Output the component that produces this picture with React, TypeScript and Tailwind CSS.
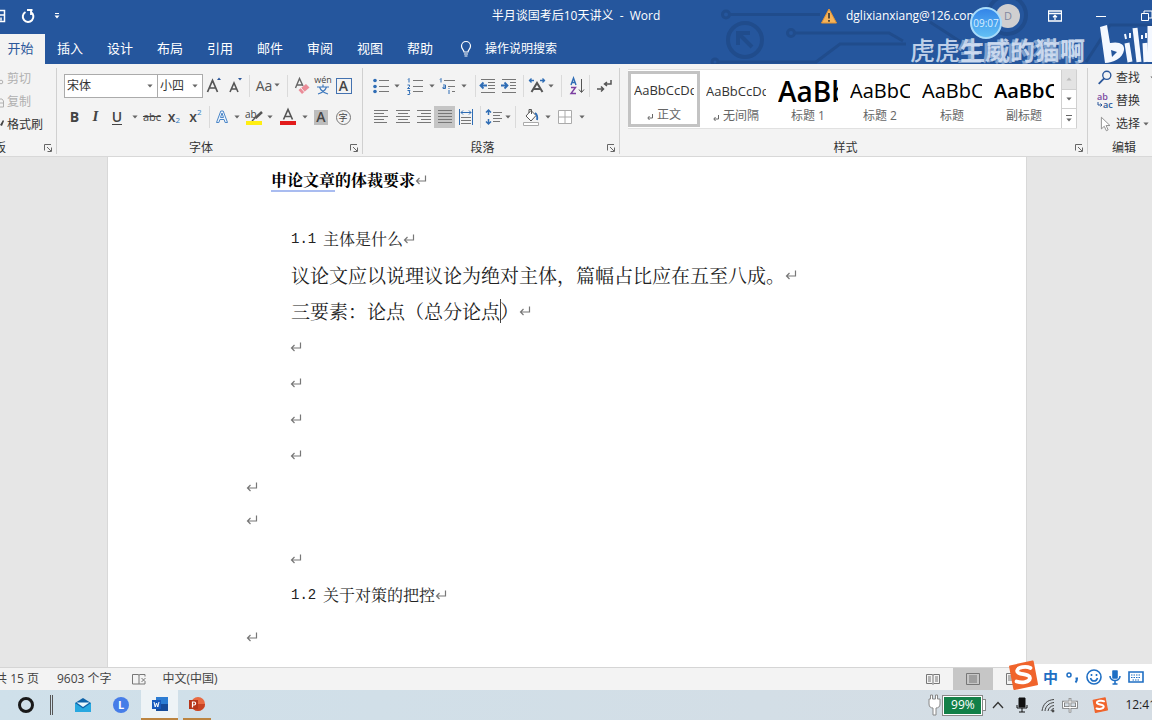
import React from "react";

type Kids = { children?: React.ReactNode };

function Caret({ className = "" }: { className?: string }) {
  return (
    <svg viewBox="0 0 6 4" className={"h-1 w-1.5 shrink-0 " + className} fill="#666" aria-hidden="true">
      <path d="M0.4 0.5h5.2L3 3.4z" />
    </svg>
  );
}

function CaretButton({ label, className = "w-2.5" }: { label: string; className?: string }) {
  return (
    <button aria-label={label} className={"flex h-[22px] shrink-0 items-center justify-center " + className}>
      <Caret />
    </button>
  );
}

function Tool({ label, className = "w-[22px]", children }: Kids & { label: string; className?: string }) {
  return (
    <button aria-label={label} className={"flex h-[22px] shrink-0 items-center justify-center " + className}>
      {children}
    </button>
  );
}

function Icon({ children, className = "h-5 w-5" }: Kids & { className?: string }) {
  return (
    <svg viewBox="0 0 20 20" className={"shrink-0 " + className} fill="none" stroke="#777" strokeWidth="1" aria-hidden="true">
      {children}
    </svg>
  );
}

function Sep({ className = "mx-0.5" }: { className?: string }) {
  return <span className={"h-[22px] w-px shrink-0 bg-[#dadada] " + className} />;
}

function Launcher() {
  return (
    <button aria-label="更多设置" className="absolute bottom-1 right-1 h-2 w-2">
      <svg viewBox="0 0 8 8" className="h-2 w-2" fill="none" stroke="#666" aria-hidden="true">
        <path d="M0.5 6.5V0.5H7M3 3l4 4M7.5 3.5v4h-4" />
      </svg>
    </button>
  );
}

function Group({ title, className, launcher = true, children }: Kids & { title: string; className: string; launcher?: boolean }) {
  return (
    <section aria-label={title} className={"relative flex flex-col " + className}>
      <div className="flex-1">{children}</div>
      <div
        className={
          "flex h-4 items-center justify-center whitespace-nowrap text-[12px] leading-4 text-[#333] " +
          (launcher ? "pr-6" : "")
        }
      >
        {title}
      </div>
      {launcher && <Launcher />}
    </section>
  );
}

function Divider() {
  return <div className="mb-0.5 mt-1 w-px shrink-0 bg-[#d0d0d0]" />;
}

function Lines({ rows }: { rows: [number, number][] }) {
  return (
    <Icon>
      {rows.map(([a, b], i) => (
        <path key={i} d={`M${a} ${3.5 + i * 3}H${b}`} />
      ))}
    </Icon>
  );
}

function Combo({ label, value, className }: { label: string; value: string; className: string }) {
  return (
    <div className={"relative flex h-6 items-center border border-[#ababab] bg-white " + className}>
      <select aria-label={label} className="h-full w-full appearance-none bg-transparent pl-0.5 text-[12px] text-[#333] outline-none">
        <option>{value}</option>
      </select>
      <Caret className="pointer-events-none absolute right-1" />
    </div>
  );
}

function FontGroup() {
  return (
    <Group title="字体" className="w-[305px] shrink-0 pl-[7px]">
      <div className="mt-[9px] flex h-[26px] items-center">
        <Combo label="字体名称" value="宋体" className="w-[94px]" />
        <Combo label="字号" value="小四" className="-ml-px w-[46px]" />
        <Tool label="增大字号">
          <Icon>
            <path d="M3.5 16L8.5 4.5 13.5 16M5.3 12h6.4" stroke="#555" strokeWidth="1.7" />
            <path d="M13 4l2-2.5L17 4z" fill="#2b579a" stroke="none" />
          </Icon>
        </Tool>
        <Tool label="减小字号">
          <Icon>
            <path d="M4 16l4-9 4 9M5.4 13h5.2" stroke="#555" strokeWidth="1.6" />
            <path d="M12 2l2 2.5L16 2z" fill="#2b579a" stroke="none" />
          </Icon>
        </Tool>
        <Sep />
        <Tool label="更改大小写" className="w-8 gap-0.5 pb-0.5 text-[14px] text-[#555]">
          Aa
          <Caret />
        </Tool>
        <Sep className="mx-[3px]" />
        <Tool label="清除所有格式" className="w-[21px]">
          <Icon>
            <path d="M3.5 12L7.5 2.5 11 10M5 9h5" stroke="#666" strokeWidth="1.4" />
            <path d="M6.500 14l7.500-6 3.500 3.500L10 18z" fill="#ea8c98" stroke="none" />
            <path d="M9 12l3.500 4" stroke="#f3f3f3" />
          </Icon>
        </Tool>
        <Tool label="拼音指南" className="w-[21px]">
          <Icon>
            <text x="10" y="7" textAnchor="middle" fontSize="9" fill="#444" stroke="none">wén</text>
            <path d="M10 8.500V11M4 11h12M6.500 11c1 3 4 5.500 8.500 7M13.500 11c-1 3-4 5.500-8.500 7" stroke="#3d78bd" strokeWidth="1.200" />
          </Icon>
        </Tool>
        <Tool label="字符边框" className="w-[21px]">
          <span className="flex h-4 w-4 items-center justify-center border border-[#4472b0] text-[14px] font-semibold leading-none text-[#444]">A</span>
        </Tool>
      </div>
      <div className="mt-[5px] flex h-[26px] items-center text-[14px] text-[#444]">
        <Tool label="加粗" className="w-[21px] pb-0.5 font-bold">B</Tool>
        <Tool label="倾斜" className="w-[21px] pb-0.5 font-[Liberation_Serif,serif] text-[15px] font-bold italic">I</Tool>
        <Tool label="下划线"><span className="border-b border-[#444] font-semibold leading-[14px]">U</span></Tool>
        <CaretButton label="下划线样式" className="w-[13px]" />
        <Tool label="删除线"><span className="text-[11px] line-through">abc</span></Tool>
        <Tool label="下标" className="w-[22px] pb-0.5"><span className="font-semibold">x</span><span className="mt-2 text-[8px] text-[#2b79c0]">2</span></Tool>
        <Tool label="上标" className="w-[21px] pb-0.5"><span className="font-semibold">x</span><span className="mb-2 text-[8px] text-[#2b79c0]">2</span></Tool>
        <Sep className="ml-[3px] mr-0.5" />
        <Tool label="文本效果" className="w-5">
          <Icon>
            <path d="M4.5 15.5L8.8 4h2.4l4.3 11.5h-2.4l-1-3H7.9l-1 3zM8.5 10.500h3L10 6z" stroke="#4a86c8" fill="#eef5fd" />
          </Icon>
        </Tool>
        <CaretButton label="文本效果选项" />
        <Tool label="突出显示" className="w-[23px]">
          <Icon>
            <text x="1" y="11" fontSize="10" fill="#444" stroke="none">ab</text>
            <path d="M18 5L11.500 11" stroke="#555" strokeWidth="2.500" />
            <path d="M11.500 10.500L8 14" stroke="#555" strokeWidth="1.500" />
            <path d="M2 14h16v4H2z" fill="#ffee12" stroke="none" />
          </Icon>
        </Tool>
        <CaretButton label="突出显示颜色" />
        <Tool label="字体颜色" className="w-[25px]">
          <Icon>
            <path d="M5.500 12.500L10 2.500l4.500 10M7 9.500h6" stroke="#555" strokeWidth="1.6" />
            <path d="M2 14h16v4H2z" fill="#e21b1b" stroke="none" />
          </Icon>
        </Tool>
        <CaretButton label="字体颜色选项" />
        <Tool label="字符底纹"><span className="flex h-[15px] w-[14px] items-center justify-center bg-[#bdbdbd] font-semibold leading-none">A</span></Tool>
        <Tool label="带圈字符"><span className="flex h-[15px] w-[15px] items-center justify-center rounded-full border border-[#777] text-[9px] leading-none">字</span></Tool>
      </div>
    </Group>
  );
}

function ParagraphGroup() {
  return (
    <Group title="段落" className="w-[256px] shrink-0 pl-[7px]">
      <div className="mt-[9px] flex h-[26px] items-center">
        <Tool label="项目符号">
          <Icon>
            <path d="M8 4.5h10M8 10.5h10M8 15.5h10" />
            <g fill="#2f6db5" stroke="none"><circle cx="4" cy="4.5" r="1.8" /><circle cx="4" cy="10.5" r="1.8" /><circle cx="4" cy="15.5" r="1.8" /></g>
          </Icon>
        </Tool>
        <CaretButton label="项目符号库" />
        <Tool label="编号" className="w-[25px]">
          <Icon>
            <path d="M8 4.5h10M8 10.5h10M8 15.5h10" />
            <path d="M3 3.500l1-1v4M2.500 9h2v1.500l-2 2h2.500M2.500 14.500H5l-1 1.500 1 1-.5 1.500h-2" stroke="#2f6db5" />
          </Icon>
        </Tool>
        <CaretButton label="编号库" />
        <Tool label="多级列表">
          <Icon>
            <path d="M6 4.5h11M10 10.5h7M14 15.5h3" />
            <path d="M2 3.500l1-1v4M5 9h2.500v3.500H5V11h2.500M11 14v4M11 12v1" stroke="#2f6db5" />
          </Icon>
        </Tool>
        <CaretButton label="多级列表库" />
        <Sep className="ml-1.5 mr-0.5" />
        <Tool label="减少缩进量" className="w-5">
          <Icon>
            <path d="M3 3.5h14M10 6.5h7M10 9.5h7M10 12.5h7M3 16.5h14" />
            <path d="M9 9.5H3M5.500 6.500l-3 3 3 3" stroke="#2f6db5" strokeWidth="1.8" />
          </Icon>
        </Tool>
        <Tool label="增加缩进量">
          <Icon>
            <path d="M3 3.5h14M11 6.5h6M11 9.5h6M11 12.5h6M3 16.5h14" />
            <path d="M2 9.5h6M5.500 6.500l3 3-3 3" stroke="#2f6db5" strokeWidth="1.8" />
          </Icon>
        </Tool>
        <Sep className="mx-[3px]" />
        <Tool label="中文版式" className="w-5">
          <Icon>
            <path d="M4.5 16L10 7l5.5 9M6.500 13h7" stroke="#555" strokeWidth="2" />
            <path d="M7 4.5H2M4.500 2.500l-2 2 2 2M13 4.5h5M15.500 2.500l2 2-2 2" stroke="#2f6db5" strokeWidth="1.300" />
          </Icon>
        </Tool>
        <CaretButton label="中文版式选项" className="w-2" />
        <Sep className="mx-1.5" />
        <Tool label="排序" className="w-[18px]">
          <Icon>
            <path d="M4 9l2.500-7L9 9M5 6.500h3" stroke="#2f6db5" strokeWidth="1.400" />
            <path d="M4 11.500h4.500l-4.500 6h5" stroke="#7b3fa0" strokeWidth="1.400" />
            <path d="M14.5 3v13M12 13.500l2.500 3 2.500-3" stroke="#555" />
          </Icon>
        </Tool>
        <Sep className="mx-[3px]" />
        <Tool label="显示编辑标记">
          <Icon>
            <path d="M17 4v4h-6M13 6l-2.500 2L13 10M3 13h6M7 10.500L9.500 13 7 15.500" stroke="#555" strokeWidth="1.5" />
          </Icon>
        </Tool>
      </div>
      <div className="mt-[5px] flex h-[26px] items-center">
        <Tool label="左对齐"><Lines rows={[[3, 17], [3, 13], [3, 17], [3, 13], [3, 16]]} /></Tool>
        <Tool label="居中" className="w-[21px]"><Lines rows={[[3, 17], [5, 15], [3, 17], [5, 15], [3, 17]]} /></Tool>
        <Tool label="右对齐" className="w-[21px]"><Lines rows={[[3, 17], [7, 17], [3, 17], [7, 17], [3, 17]]} /></Tool>
        <Tool label="两端对齐" className="w-[21px] bg-[#c5c5c5]"><Lines rows={[[3, 17], [3, 17], [3, 17], [3, 17], [3, 17]]} /></Tool>
        <Tool label="分散对齐" className="w-[21px]">
          <Icon>
            <path d="M3.5 2v16M16.5 2v16M5 5.5h10M7 3.500l-2 2 2 2M13 3.500l2 2-2 2" stroke="#2f6db5" />
            <path d="M5 10.5h10M5 13.5h10M5 16.5h10" />
          </Icon>
        </Tool>
        <Sep className="ml-1 mr-0.5" />
        <Tool label="行距">
          <Icon>
            <path d="M4.5 3v5M4.5 12v5M2 5.500L4.5 3 7 5.500M2 14.500L4.5 17 7 14.500" stroke="#2f6db5" strokeWidth="1.5" />
            <path d="M9 5.5h9M9 8.5h7M9 11.5h9M9 14.5h7" />
          </Icon>
        </Tool>
        <CaretButton label="行距选项" className="w-1.5" />
        <Sep className="mx-1" />
        <Tool label="底纹">
          <Icon>
            <path d="M5 9l5-5.500 5 5-5 5.500zM8 6V2.500h2.500V7" stroke="#555" fill="#fff" />
            <path d="M14 6q3 2 2 7" stroke="#2f6db5" strokeWidth="1.8" />
            <path d="M2.5 15.5h15v3h-15z" fill="#fff" stroke="#aaa" />
          </Icon>
        </Tool>
        <CaretButton label="底纹颜色" className="w-3" />
        <Tool label="边框">
          <Icon><path d="M3.5 3.5h13v13h-13zM10 3.500v13M3.5 10h13" stroke="#aaa" fill="#fff" /></Icon>
        </Tool>
        <CaretButton label="边框选项" className="w-3" />
      </div>
    </Group>
  );
}

const styles = [
  { name: "正文", mark: true, sample: "AaBbCcDd", look: "text-[13px] text-[#333]" },
  { name: "无间隔", mark: true, sample: "AaBbCcDd", look: "text-[13px] text-[#333]" },
  { name: "标题 1", mark: false, sample: "AaBb", look: "text-[28px] font-semibold text-black" },
  { name: "标题 2", mark: false, sample: "AaBbC", look: "text-[20px] text-black" },
  { name: "标题", mark: false, sample: "AaBbC", look: "text-[20px] text-black" },
  { name: "副标题", mark: false, sample: "AaBbC", look: "text-[20px] font-semibold text-black" },
];

function StylesGroup() {
  return (
    <Group title="样式" className="min-w-0 flex-1 pl-2">
      <div className="mt-[5px] flex h-[60px] w-fit border-y border-[#e1e1e1] bg-white">
        {styles.map((s, i) => (
          <button
            key={s.name}
            className={
              "my-px flex w-[72px] flex-col overflow-hidden " +
              (i === 0 ? "border-[3px] border-[#c3c3c3] px-[3px]" : "px-1.5 pt-[3px]")
            }
          >
            <span className={"flex h-[33px] w-full items-center overflow-hidden whitespace-nowrap leading-8 " + s.look}>{s.sample}</span>
            <span className="flex h-[18px] w-full items-center justify-center gap-1 whitespace-nowrap text-[12px] leading-4 text-[#666]">
              {s.mark && (
                <svg viewBox="0 0 6 6" className="mt-1 h-1.5 w-1.5" fill="none" stroke="#666" aria-hidden="true">
                  <path d="M5.500 0v4H1M2.500 2L0.800 4l1.700 2" />
                </svg>
              )}
              {s.name}
            </span>
          </button>
        ))}
        <div className="ml-px flex w-4 flex-col border-x border-[#d0d0d0]">
          <button aria-label="上一行" className="flex flex-1 items-center justify-center bg-[#e3e3e3]"><Caret className="rotate-180 opacity-30" /></button>
          <button aria-label="下一行" className="flex flex-1 items-center justify-center border-y border-[#d0d0d0]"><Caret /></button>
          <button aria-label="其他样式" className="flex flex-1 flex-col items-center justify-center gap-0.5"><span className="h-px w-1.5 bg-[#666]" /><Caret /></button>
        </div>
      </div>
    </Group>
  );
}

function EditGroup() {
  return (
    <Group title="编辑" launcher={false} className="w-16 shrink-0 pl-2">
      <div className="mt-0.5 flex flex-col text-[12px] text-[#333]">
        <button className="flex h-[23px] items-center gap-0.5 whitespace-nowrap">
          <Icon className="h-[18px] w-[18px]"><circle cx="12" cy="7" r="4.5" stroke="#2b579a" strokeWidth="1.5" /><path d="M9 10.500l-6 6" stroke="#2b579a" strokeWidth="2" /></Icon>
          查找<Caret className="ml-2" />
        </button>
        <button className="flex h-[23px] items-center gap-0.5 whitespace-nowrap">
          <svg viewBox="0 0 18 18" className="h-[18px] w-[18px]" fontSize="9" fontWeight="600" aria-hidden="true">
            <text x="1" y="8" fill="#7a4aa0">ab</text>
            <text x="7" y="16" fill="#2b579a">ac</text>
            <path d="M2 10v3h4M4.5 11.500L6 13l-1.500 1.500" fill="none" stroke="#2b579a" />
          </svg>
          替换
        </button>
        <button className="flex h-[23px] items-center gap-0.5 whitespace-nowrap">
          <Icon className="h-[18px] w-[18px]"><path d="M6 2.500v13l3.200-3 2.300 5 2-1-2.300-4.800h4.300z" fill="#fff" stroke="#888" /></Icon>
          选择<Caret className="ml-px" />
        </button>
      </div>
    </Group>
  );
}

function ClipboardGroup() {
  return (
    <section aria-label="剪贴板" className="relative flex w-14 shrink-0 flex-col overflow-hidden text-[12px]">
      <div className="flex flex-1 flex-col pt-[3px]">
        <button className="flex h-[23px] items-center gap-[3px] whitespace-nowrap text-[#b0b0b0]">
          <svg viewBox="0 0 4 12" className="h-3 w-1" aria-hidden="true"><circle cx="1" cy="9" r="1.8" fill="none" stroke="#b0b0b0" /></svg>
          剪切
        </button>
        <button className="flex h-[23px] items-center gap-[3px] whitespace-nowrap text-[#b0b0b0]">
          <svg viewBox="0 0 4 12" className="h-3 w-1" aria-hidden="true"><path d="M0 3h2l1.500 2v6H0M0 7h3" fill="none" stroke="#b0b0b0" /></svg>
          复制
        </button>
        <button className="flex h-[23px] items-center gap-[3px] whitespace-nowrap text-[#333]">
          <svg viewBox="0 0 4 12" className="h-3 w-1" aria-hidden="true"><path d="M0 6l3-5 1 1-2 5z" fill="#444" /></svg>
          格式刷
        </button>
      </div>
      <div className="flex h-4 w-1.5 items-center justify-end whitespace-nowrap leading-4 text-[#333]">剪贴板</div>
      <Launcher />
    </section>
  );
}

const tabs = ["插入", "设计", "布局", "引用", "邮件", "审阅", "视图", "帮助"];

function Header() {
  return (
    <header className="relative shrink-0 overflow-hidden bg-[#25569d] text-white">
      <svg viewBox="0 0 452 64" className="absolute right-0 top-0 h-16 w-[452px]" fill="none" stroke="#204c8c" strokeWidth="3" aria-hidden="true">
        <circle cx="26" cy="14.5" r="3.5" /><path d="M30 14.500h90" />
        <circle cx="45" cy="40" r="17" strokeWidth="4" /><path d="M52 47L39 34M38 45V33h12" strokeWidth="4" />
        <circle cx="91" cy="33" r="3.5" /><path d="M95 33h94l14 8M116 62l24-18h66" />
        <circle cx="15" cy="62" r="3" /><path d="M19 62h98M230 22l34 22M386 62l24-37h42" />
        <circle cx="307" cy="15" r="19" strokeWidth="4" />
      </svg>
      <div className="relative flex h-[34px] items-center pb-0.5 text-[12px]">
        <div className="flex min-w-0 flex-1 items-center">
          <button aria-label="保存" className="h-4 w-1.5">
            <svg viewBox="0 0 6 14" className="h-3.5 w-1.5" fill="none" stroke="#fff" strokeWidth="1.5" aria-hidden="true"><path d="M0 1.500h4.500v11H0M0 6h4M1 8.500v3" /></svg>
          </button>
          <button aria-label="重复" className="ml-3.5">
            <svg viewBox="0 0 16 16" className="h-4 w-4" fill="none" stroke="#fff" strokeWidth="2" aria-hidden="true"><path d="M5.500 4A5.300 5.300 0 1 0 11 4.200" /><path d="M7 2h5.500M11 2v5" strokeWidth="1.800" /></svg>
          </button>
          <button aria-label="自定义快速访问工具栏" className="ml-[18px]">
            <svg viewBox="0 0 6 6" className="h-1.5 w-1.5" fill="#fff" aria-hidden="true"><path d="M1 0h4v1H1zM0.500 2.500h5L3 5.500z" /></svg>
          </button>
        </div>
        <h1 className="shrink-0 whitespace-pre">半月谈国考后10天讲义  -  Word</h1>
        <div className="flex min-w-0 flex-1 items-center justify-end">
          <svg viewBox="0 0 16 16" className="h-4 w-4 shrink-0" aria-hidden="true"><path d="M8 1l7.500 14H.5z" fill="#f6b45a" stroke="#e59433" /><path d="M8 5v5.500M8 12v1.800" stroke="#333" strokeWidth="1.6" /></svg>
          <span className="ml-[9px] mr-[23px] w-[127px] overflow-hidden whitespace-nowrap">dglixianxiang@126.com</span>
          <span className="flex h-6 w-6 shrink-0 items-center justify-center rounded-full bg-[#d0cfd0] text-[11px] text-[#8088a0]">D</span>
          <button aria-label="功能区显示选项" className="ml-7">
            <svg viewBox="0 0 14 12" className="h-3 w-3.5" fill="none" stroke="#fff" strokeWidth="1.300" aria-hidden="true"><path d="M.5 1h13v10H.5zM.5 3.500h13M7 10V5.500M5 7.300l2-2 2 2" /></svg>
          </button>
          <button aria-label="最小化" className="ml-[34px] flex h-4 w-2.5 items-center"><span className="h-px w-2.5 bg-white" /></button>
          <button aria-label="还原" className="ml-[35px]">
            <svg viewBox="0 0 11 12" className="h-3 w-[11px]" fill="none" stroke="#fff" aria-hidden="true"><path d="M.5 3.500h7v7h-7zM3 3.500V1h8v7H7.500" /></svg>
          </button>
        </div>
      </div>
      <nav className="relative flex h-[30px] text-[13px]">
        <button className="flex w-[45px] items-center justify-center bg-[#f3f3f3] pr-1 text-[#2b579a]">开始</button>
        {tabs.map((t) => (
          <button key={t} className="w-[50px]">{t}</button>
        ))}
        <button className="ml-3.5 flex items-center gap-3 whitespace-nowrap text-[12px]">
          <svg viewBox="0 0 14 18" className="h-[18px] w-3.5" fill="none" stroke="#fff" strokeWidth="1.2" aria-hidden="true"><path d="M5 12c0-2-2.500-3-2.500-6a4.500 4.500 0 0 1 9 0c0 3-2.500 4-2.500 6zM5 14h4M5.500 16h3" /></svg>
          操作说明搜索
        </button>
      </nav>
      <div className="absolute right-[150px] top-[7px] flex h-8 w-8 items-center justify-center rounded-full border-2 border-[#a9dcfa] bg-linear-to-b from-[#3485e8] to-[#63c0f4] text-[10px] text-[#d9f0ff]">09:07</div>
      <div className="absolute right-[67px] top-[35px] whitespace-nowrap text-[25px] font-medium leading-[30px] text-[#dbe6f6]/85">
        虎虎<span className="font-bold [text-shadow:-3px_1px_0_rgba(220,232,250,0.5)]">生威的猫啊</span>
      </div>
      <svg viewBox="0 0 52 42" className="absolute right-0 top-[23px] h-[42px] w-[52px]" fill="none" stroke="#f4f8ff" aria-label="bilibili" role="img">
        <path d="M0 4l7-2 3 18c9-2 15 1 14 7-1 8-11 13-19 13z" fill="#f4f8ff" stroke="none" />
        <path d="M11 27l6 2-5 5z" fill="#25569d" stroke="none" />
        <path d="M27 20l3 19M45 20l1 19" strokeWidth="5" />
        <path d="M35 5l4 34" strokeWidth="5" />
        <path d="M50 3v36" strokeWidth="5" />
        <path d="M25 11l1 5M30 10v5M42 12v4M46 10v5" strokeWidth="2" />
      </svg>
    </header>
  );
}

function Mark() {
  return (
    <svg viewBox="0 0 12 10" className="h-2.5 w-3 shrink-0" fill="none" stroke="#777" strokeWidth="1.200" aria-hidden="true">
      <path d="M10.500 0.500V6H1.500M4.500 3L1.500 6l3 3" />
    </svg>
  );
}

function Line({ className, children }: Kids & { className: string }) {
  return (
    <p className={"flex items-center whitespace-nowrap " + className}>
      {children}
      <Mark />
    </p>
  );
}

function Document() {
  return (
    <main className="flex min-h-0 flex-1 overflow-hidden bg-[#e6e6e6] pl-[107px] pr-[125px]">
      <article className="min-w-0 flex-1 border-x border-[#d8d8d8] bg-white pl-[138px] font-['Noto_Serif_CJK_SC','Noto_Sans_CJK_SC',serif] font-normal text-[#222]">
        <Line className="h-[46px] pl-[25px] text-[16px] font-bold text-black">
          <span className="underline decoration-[#a9bcf0] decoration-2 underline-offset-4">申论文章</span>的体裁要求
        </Line>
        <Line className="mt-[18px] h-9 pl-[45px] text-[16px]">
          <span className="w-8 font-['Liberation_Mono',monospace] text-[14px]">1.1</span>主体是什么
        </Line>
        <Line className="h-9 pl-[45px] text-[19px]">议论文应以说理议论为绝对主体，篇幅占比应在五至八成。</Line>
        <Line className="h-9 pl-[45px] text-[19px]">
          三要素：论点（总分论点<span className="-mr-px h-6 w-px bg-[#444]" />）
        </Line>
        <Line className="h-9 pl-11" />
        <Line className="h-9 pl-11" />
        <Line className="h-9 pl-11" />
        <Line className="h-9 pl-11" />
        <Line className="h-7" />
        <Line className="h-[38px]" />
        <Line className="h-10 pl-11" />
        <Line className="h-8 pl-[45px] text-[16px]">
          <span className="w-8 font-['Liberation_Mono',monospace] text-[14px]">1.2</span>关于对策的把控
        </Line>
        <Line className="h-[52px]" />
      </article>
    </main>
  );
}

function Sogou({ className }: { className: string }) {
  return (
    <svg viewBox="0 0 28 28" className={className} aria-hidden="true">
      <path d="M2 6L23 1.500l4 21L6 27z" fill="#f0642c" stroke="#f0642c" strokeWidth="2" strokeLinejoin="round" />
      <path d="M21 7.500c-4-2-12-1-12.500 2.500-.5 4 12.500 2.500 12 7-.5 4-8 4.500-12.500 3" fill="none" stroke="#fff" strokeWidth="3.5" strokeLinecap="round" />
    </svg>
  );
}

function StatusBar() {
  return (
    <div className="relative flex h-[23px] shrink-0 items-center border-t border-[#d5d5d5] bg-[#f3f3f3] text-[12px] text-[#444]">
      <span className="flex w-[39px] justify-end whitespace-nowrap">第 3 页，共 15 页</span>
      <span className="ml-[18px] whitespace-nowrap">9603 个字</span>
      <button aria-label="校对" className="ml-5">
        <svg viewBox="0 0 15 12" className="h-3 w-[15px]" fill="none" stroke="#777" aria-hidden="true"><path d="M7 2v9H.5V1.500H6zM7 2l1-.5h5v2M7 11h6V9M9.500 5l4 4M13.500 5l-4 4" /></svg>
      </button>
      <span className="ml-4 whitespace-nowrap">中文(中国)</span>
      <div className="ml-auto mr-[119px] flex h-full">
        <button aria-label="阅读视图" className="flex w-10 items-center justify-center">
          <svg viewBox="0 0 14 12" className="h-3 w-3.5" fill="none" stroke="#777" aria-hidden="true"><path d="M.5 1.500H6l1 .5 1-.5h5.500v9H8l-1 1-1-1H.5zM7 2v9M2 4h3M2 6h3M2 8h3M9 4h3M9 6h3M9 8h3" /></svg>
        </button>
        <button aria-label="页面视图" className="flex w-10 items-center justify-center bg-[#c6c6c6]">
          <svg viewBox="0 0 14 12" className="h-3 w-3.5" fill="none" stroke="#777" aria-hidden="true"><path d="M.5.5h13v11H.5zM3 3h8M3 5h8M3 7h8M3 9h8" /></svg>
        </button>
        <button aria-label="Web 版式视图" className="flex w-10 items-center justify-center">
          <svg viewBox="0 0 14 12" className="h-3 w-3.5" fill="none" stroke="#777" aria-hidden="true"><path d="M.5.5h13v11H.5zM2 3h8M2 5h8M2 7h8" /></svg>
        </button>
      </div>
      <div className="absolute -top-1 bottom-0 right-0 flex w-[136px] items-center gap-[7px] bg-white pl-[27px] text-[#1f6fc4]">
        <Sogou className="absolute -left-2 -top-1 h-[30px] w-[30px]" />
        <span className="text-[15px] font-bold leading-none">中</span>
        <svg viewBox="0 0 14 16" className="h-4 w-3.5 shrink-0" fill="none" stroke="#1f6fc4" strokeWidth="1.5" aria-hidden="true"><circle cx="4" cy="6" r="2" /><path d="M10.500 9.500h1.500c0 2-.5 3-1.500 4" strokeWidth="2" /></svg>
        <svg viewBox="0 0 16 16" className="h-4 w-4 shrink-0" fill="none" stroke="#1f6fc4" strokeWidth="1.6" aria-hidden="true"><circle cx="8" cy="8" r="7" /><path d="M4.500 9c1 4 6 4 7 0M5.500 5v2M10.500 5v2" /></svg>
        <svg viewBox="0 0 12 16" className="h-4 w-3 shrink-0" fill="none" stroke="#1f6fc4" strokeWidth="1.6" aria-hidden="true"><path d="M4 2h4v7H4z" fill="#1f6fc4" strokeLinejoin="round" /><path d="M1 7c0 6 10 6 10 0M6 11.500V15M3.500 15h5" /></svg>
        <svg viewBox="0 0 16 12" className="h-3 w-4 shrink-0" fill="none" stroke="#1f6fc4" strokeWidth="1.6" aria-hidden="true"><path d="M1 1h14v10H1z" /><path d="M3 4h10M3 6.500h10M4.500 9h7" strokeWidth="1.2" strokeDasharray="1.500 1" /></svg>
      </div>
    </div>
  );
}

function Taskbar() {
  return (
    <footer className="flex h-[30px] shrink-0 items-center bg-linear-to-r from-[#cfe0ea] to-[#d5dde4] text-[12px] text-[#222]">
      <button aria-label="Cortana" className="ml-[18px] h-4 w-4 rounded-full border-[3px] border-[#1a1a1a]" />
      <span className="ml-4 h-5 w-[3px] border-x border-[#555]" />
      <button aria-label="邮件" className="ml-[22px]">
        <svg viewBox="0 0 16 16" className="h-4 w-4" aria-hidden="true"><path d="M0 6l8-5 8 5v9H0z" fill="#0f63a8" /><path d="M1.500 5.500h13L8 10z" fill="#e8f6fd" /><path d="M0 6l8 5.500L16 6v9H0z" fill="#28a8e0" /></svg>
      </button>
      <button aria-label="联想" className="ml-[22px] flex h-4 w-4 items-center justify-center rounded-full bg-[#467de8] text-[11px] font-bold text-white">L</button>
      <button aria-label="Word" className="ml-3 flex h-full w-[37px] items-center justify-center border-b-2 border-[#bc8440] bg-[#eef3f6]">
        <svg viewBox="0 0 16 16" className="h-4 w-4" aria-hidden="true"><path d="M4 1h12v14H4z" fill="#2b7cd3" /><path d="M4 8h12v7H4z" fill="#164b9a" /><path d="M0 4h9v9H0z" fill="#185abd" /><path d="M2 6l1.200 5 1.300-4 1.300 4L7 6" fill="none" stroke="#fff" /></svg>
      </button>
      <button aria-label="PowerPoint" className="ml-[5px] flex h-full w-7 items-center justify-center border-b-2 border-[#bc8440]">
        <svg viewBox="0 0 16 16" className="h-4 w-4" aria-hidden="true"><circle cx="9" cy="8" r="7" fill="#e86a42" /><path d="M9 8h7a7 7 0 0 1-14 0z" fill="#c84323" /><path d="M0 4h9v9H0z" fill="#b7361a" /><path d="M3.500 11.500V6h1.600c2 0 2 3 0 3H3.500" fill="none" stroke="#fff" strokeWidth="1.2" /></svg>
      </button>
      <div className="-mr-1 ml-auto flex items-center">
        <svg viewBox="0 0 14 22" className="h-[22px] w-3.5" fill="#fff" stroke="#888" aria-hidden="true"><path d="M3.500 5V1h2v4h3V1h2v4h2.500v5c0 3-2 4-4 4v7h-3v-7c-2 0-4-1-4-4V5z" /></svg>
        <span className="ml-0.5 flex h-[19px] w-[39px] items-center justify-center border border-white bg-[#128048] text-[12px] text-white outline outline-[#888]">99%</span>
        <span className="h-3 w-1 border border-[#888] bg-white" />
        <svg viewBox="0 0 12 8" className="ml-1.5 h-2 w-3" fill="none" stroke="#333" strokeWidth="1.3" aria-hidden="true"><path d="M1 7l5-5.500L11 7" /></svg>
        <svg viewBox="0 0 12 16" className="ml-3 h-4 w-3" aria-hidden="true"><path d="M3 1h6v9H3z" fill="#111" stroke="#111" strokeLinejoin="round" /><path d="M1 8v3h10V8M6 11v4M3 15h6" fill="none" stroke="#111" /></svg>
        <svg viewBox="0 0 16 16" className="ml-3 h-4 w-4" fill="none" stroke="#444" aria-hidden="true"><path d="M2 14C3 7 7 3 14 2.500M5 14c.5-5 4-8 9-8.500M8 14c.5-3 2.500-5 6-5.500M11 14c.5-1.500 1-2 3-2.500" /><circle cx="13" cy="14" r="1" fill="#444" /></svg>
        <svg viewBox="0 0 16 16" className="ml-1.5 h-4 w-4" fill="none" aria-hidden="true">
          <path d="M1.500 5h13v5.500h-13zM8 1v14.500" stroke="#777" strokeWidth="2.600" />
          <path d="M1.500 5h13v5.500h-13zM8 1.500v13.500" stroke="#fff" />
        </svg>
        <Sogou className="ml-3.5 h-4 w-4" />
        <time className="ml-[17px] whitespace-nowrap text-[12px]">12:41</time>
      </div>
    </footer>
  );
}

export default function App() {
  return (
    <div className="flex h-screen flex-col overflow-hidden font-['Open_Sans','Noto_Sans_CJK_SC',sans-serif]">
      <Header />
      <div className="flex h-[93px] shrink-0 overflow-hidden border-b border-[#d8d8d8] bg-[#f3f3f3]">
        <ClipboardGroup />
        <Divider />
        <FontGroup />
        <Divider />
        <ParagraphGroup />
        <Divider />
        <StylesGroup />
        <Divider />
        <EditGroup />
      </div>
      <Document />
      <StatusBar />
      <Taskbar />
    </div>
  );
}
